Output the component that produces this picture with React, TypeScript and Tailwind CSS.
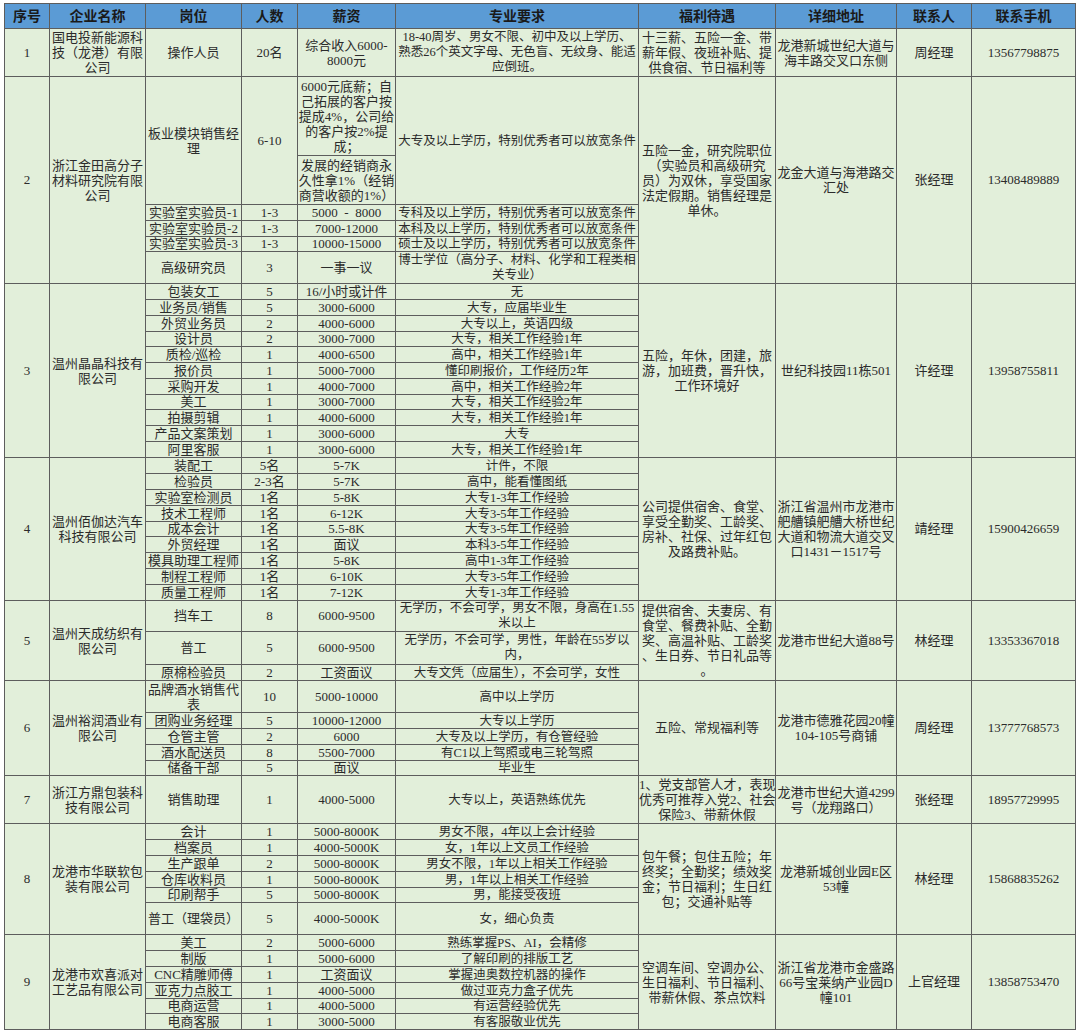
import React from 'react';

type Text = string | string[];

type Job = {
  pos: Text;
  num: string;
  pay: Text;
  pay2?: Text;
  req: Text;
  h: string;
  h2?: string;
};

type Company = {
  no: string;
  name: Text;
  welfare: Text;
  addr: Text;
  contact: string;
  phone: string;
  jobs: Job[];
};

const companies: Company[] = [
  {
    no: '1',
    name: ['国电投新能源科', '技（龙港）有限', '公司'],
    welfare: ['十三薪、五险一金、带', '薪年假、夜班补贴、提', '供食宿、节日福利等'],
    addr: ['龙港新城世纪大道与', '海丰路交叉口东侧'],
    contact: '周经理',
    phone: '13567798875',
    jobs: [
      {
        pos: '操作人员',
        num: '20名',
        pay: ['综合收入6000-', '8000元'],
        req: ['18-40周岁、男女不限、初中及以上学历、', '熟悉26个英文字母、无色盲、无纹身、能适', '应倒班。'],
        h: 'h-[48px]',
      },
    ],
  },
  {
    no: '2',
    name: ['浙江金田高分子', '材料研究院有限', '公司'],
    welfare: ['五险一金，研究院职位', '（实验员和高级研究', '员）为双休，享受国家', '法定假期。销售经理是', '单休。'],
    addr: ['龙金大道与海港路交', '汇处'],
    contact: '张经理',
    phone: '13408489889',
    jobs: [
      {
        pos: ['板业模块销售经', '理'],
        num: '6-10',
        pay: ['6000元底薪；自', '己拓展的客户按', '提成4%，公司给', '的客户按2%提', '成；'],
        pay2: ['发展的经销商永', '久性拿1%（经销', '商营收额的1%）'],
        req: '大专及以上学历，特别优秀者可以放宽条件',
        h: 'h-[79px]',
        h2: 'h-[49px]',
      },
      { pos: '实验室实验员-1', num: '1-3', pay: '5000  -  8000', req: '专科及以上学历，特别优秀者可以放宽条件', h: 'h-[16px]' },
      { pos: '实验室实验员-2', num: '1-3', pay: '7000-12000', req: '本科及以上学历，特别优秀者可以放宽条件', h: 'h-[16px]' },
      { pos: '实验室实验员-3', num: '1-3', pay: '10000-15000', req: '硕士及以上学历，特别优秀者可以放宽条件', h: 'h-[15px]' },
      { pos: '高级研究员', num: '3', pay: '一事一议', req: ['博士学位（高分子、材料、化学和工程类相', '关专业）'], h: 'h-[32px]' },
    ],
  },
  {
    no: '3',
    name: ['温州晶晶科技有', '限公司'],
    welfare: ['五险，年休，团建，旅', '游，加班费，晋升快，', '工作环境好'],
    addr: '世纪科技园11栋501',
    contact: '许经理',
    phone: '13958755811',
    jobs: [
      { pos: '包装女工', num: '5', pay: '16/小时或计件', req: '无', h: 'h-[16px]' },
      { pos: '业务员/销售', num: '5', pay: '3000-6000', req: '大专，应届毕业生', h: 'h-[16px]' },
      { pos: '外贸业务员', num: '2', pay: '4000-6000', req: '大专以上，英语四级', h: 'h-[16px]' },
      { pos: '设计员', num: '2', pay: '3000-7000', req: '大专，相关工作经验1年', h: 'h-[15px]' },
      { pos: '质检/巡检', num: '1', pay: '4000-6500', req: '高中，相关工作经验1年', h: 'h-[16px]' },
      { pos: '报价员', num: '1', pay: '5000-7000', req: '懂印刷报价，工作经历2年', h: 'h-[16px]' },
      { pos: '采购开发', num: '1', pay: '4000-7000', req: '高中，相关工作经验2年', h: 'h-[16px]' },
      { pos: '美工', num: '1', pay: '3000-7000', req: '大专，相关工作经验2年', h: 'h-[15px]' },
      { pos: '拍摄剪辑', num: '1', pay: '4000-6000', req: '大专，相关工作经验1年', h: 'h-[16px]' },
      { pos: '产品文案策划', num: '1', pay: '3000-6000', req: '大专', h: 'h-[16px]' },
      { pos: '阿里客服', num: '1', pay: '3000-6000', req: '大专，相关工作经验1年', h: 'h-[16px]' },
    ],
  },
  {
    no: '4',
    name: ['温州佰伽达汽车', '科技有限公司'],
    welfare: ['公司提供宿舍、食堂、', '享受全勤奖、工龄奖、', '房补、社保、过年红包', '及路费补贴。'],
    addr: ['浙江省温州市龙港市', '舥艚镇舥艚大桥世纪', '大道和物流大道交叉', '口1431－1517号'],
    contact: '靖经理',
    phone: '15900426659',
    jobs: [
      { pos: '装配工', num: '5名', pay: '5-7K', req: '计件，不限', h: 'h-[16px]' },
      { pos: '检验员', num: '2-3名', pay: '5-7K', req: '高中，能看懂图纸', h: 'h-[16px]' },
      { pos: '实验室检测员', num: '1名', pay: '5-8K', req: '大专1-3年工作经验', h: 'h-[16px]' },
      { pos: '技术工程师', num: '1名', pay: '6-12K', req: '大专3-5年工作经验', h: 'h-[16px]' },
      { pos: '成本会计', num: '1名', pay: '5.5-8K', req: '大专3-5年工作经验', h: 'h-[15px]' },
      { pos: '外贸经理', num: '1名', pay: '面议', req: '本科3-5年工作经验', h: 'h-[16px]' },
      { pos: '模具助理工程师', num: '1名', pay: '5-8K', req: '高中1-3年工作经验', h: 'h-[16px]' },
      { pos: '制程工程师', num: '1名', pay: '6-10K', req: '大专3-5年工作经验', h: 'h-[16px]' },
      { pos: '质量工程师', num: '1名', pay: '7-12K', req: '大专1-3年工作经验', h: 'h-[16px]' },
    ],
  },
  {
    no: '5',
    name: ['温州天成纺织有', '限公司'],
    welfare: ['提供宿舍、夫妻房、有', '食堂、餐费补贴、全勤', '奖、高温补贴、工龄奖', '、生日券、节日礼品等', '。'],
    addr: '龙港市世纪大道88号',
    contact: '林经理',
    phone: '13353367018',
    jobs: [
      { pos: '挡车工', num: '8', pay: '6000-9500', req: ['无学历，不会可学，男女不限，身高在1.55', '米以上'], h: 'h-[31px]' },
      { pos: '普工', num: '5', pay: '6000-9500', req: ['无学历，不会可学，男性，年龄在55岁以', '内，'], h: 'h-[33px]' },
      { pos: '原棉检验员', num: '2', pay: '工资面议', req: '大专文凭（应届生），不会可学，女性', h: 'h-[16px]' },
    ],
  },
  {
    no: '6',
    name: ['温州裕润酒业有', '限公司'],
    welfare: '五险、常规福利等',
    addr: ['龙港市德雅花园20幢', '104-105号商铺'],
    contact: '周经理',
    phone: '13777768573',
    jobs: [
      { pos: ['品牌酒水销售代', '表'], num: '10', pay: '5000-10000', req: '高中以上学历', h: 'h-[32px]' },
      { pos: '团购业务经理', num: '5', pay: '10000-12000', req: '大专以上学历', h: 'h-[16px]' },
      { pos: '仓管主管', num: '2', pay: '6000', req: '大专及以上学历，有仓管经验', h: 'h-[16px]' },
      { pos: '酒水配送员', num: '8', pay: '5500-7000', req: '有C1以上驾照或电三轮驾照', h: 'h-[16px]' },
      { pos: '储备干部', num: '5', pay: '面议', req: '毕业生', h: 'h-[15px]' },
    ],
  },
  {
    no: '7',
    name: ['浙江方鼎包装科', '技有限公司'],
    welfare: ['1、党支部管人才，表现', '优秀可推荐入党2、社会', '保险3、带薪休假'],
    addr: ['龙港市世纪大道4299', '号（龙翔路口）'],
    contact: '张经理',
    phone: '18957729995',
    jobs: [{ pos: '销售助理', num: '1', pay: '4000-5000', req: '大专以上，英语熟练优先', h: 'h-[48px]' }],
  },
  {
    no: '8',
    name: ['龙港市华联软包', '装有限公司'],
    welfare: ['包午餐；包住五险；年', '终奖；全勤奖；绩效奖', '金；节日福利；生日红', '包；交通补贴等'],
    addr: ['龙港新城创业园E区', '53幢'],
    contact: '林经理',
    phone: '15868835262',
    jobs: [
      { pos: '会计', num: '1', pay: '5000-8000K', req: '男女不限，4年以上会计经验', h: 'h-[16px]' },
      { pos: '档案员', num: '1', pay: '4000-5000K', req: '女，1年以上文员工作经验', h: 'h-[16px]' },
      { pos: '生产跟单', num: '2', pay: '5000-8000K', req: '男女不限，1年以上相关工作经验', h: 'h-[16px]' },
      { pos: '仓库收料员', num: '1', pay: '5000-8000K', req: '男，1年以上相关工作经验', h: 'h-[16px]' },
      { pos: '印刷帮手', num: '5', pay: '5000-8000K', req: '男，能接受夜班', h: 'h-[15px]' },
      { pos: '普工（理袋员）', num: '5', pay: '4000-5000K', req: '女，细心负责', h: 'h-[32px]' },
    ],
  },
  {
    no: '9',
    name: ['龙港市欢喜派对', '工艺品有限公司'],
    welfare: ['空调车间、空调办公、', '生日福利、节日福利、', '带薪休假、茶点饮料'],
    addr: ['浙江省龙港市金盛路', '66号宝莱纳产业园D', '幢101'],
    contact: '上官经理',
    phone: '13858753470',
    jobs: [
      { pos: '美工', num: '2', pay: '5000-6000', req: '熟练掌握PS、AI，会精修', h: 'h-[16px]' },
      { pos: '制版', num: '1', pay: '5000-6000', req: '了解印刷的排版工艺', h: 'h-[16px]' },
      { pos: 'CNC精雕师傅', num: '1', pay: '工资面议', req: '掌握迪奥数控机器的操作', h: 'h-[16px]' },
      { pos: '亚克力点胶工', num: '1', pay: '4000-5000', req: '做过亚克力盒子优先', h: 'h-[16px]' },
      { pos: '电商运营', num: '1', pay: '4000-5000', req: '有运营经验优先', h: 'h-[15px]' },
      { pos: '电商客服', num: '1', pay: '3000-5000', req: '有客服敬业优先', h: 'h-[16px]' },
    ],
  },
];

const headers = ['序号', '企业名称', '岗位', '人数', '薪资', '专业要求', '福利待遇', '详细地址', '联系人', '联系手机'];

const base = 'border border-[#5d5d5d] p-0 text-center align-middle whitespace-pre leading-[14px] text-[#2b2b2b]';
const cell = base + ' text-[13px]';
const reqCell = base + ' text-[12.5px]';

function Lines({ t }: { t: Text }) {
  if (!Array.isArray(t)) return <>{t}</>;
  return (
    <div className="leading-[15px]">
      {t.map((s, i) => (
        <React.Fragment key={i}>
          {i > 0 && <br />}
          {s}
        </React.Fragment>
      ))}
    </div>
  );
}

function CompanyRows({ co }: { co: Company }) {
  const span = co.jobs.reduce((n, j) => n + (j.pay2 ? 2 : 1), 0);
  const rows: React.ReactNode[] = [];

  co.jobs.forEach((j, i) => {
    const first = i === 0;
    const rs = j.pay2 ? 2 : 1;
    rows.push(
      <tr key={`${co.no}-${i}`} className={j.h}>
        {first && (
          <>
            <td rowSpan={span} className={cell}>{co.no}</td>
            <td rowSpan={span} className={cell}><Lines t={co.name} /></td>
          </>
        )}
        <td rowSpan={rs} className={cell}><Lines t={j.pos} /></td>
        <td rowSpan={rs} className={cell}>{j.num}</td>
        <td className={cell}><Lines t={j.pay} /></td>
        <td rowSpan={rs} className={reqCell}><Lines t={j.req} /></td>
        {first && (
          <>
            <td rowSpan={span} className={cell}><Lines t={co.welfare} /></td>
            <td rowSpan={span} className={cell}><Lines t={co.addr} /></td>
            <td rowSpan={span} className={cell}>{co.contact}</td>
            <td rowSpan={span} className={cell}>{co.phone}</td>
          </>
        )}
      </tr>
    );
    if (j.pay2) {
      rows.push(
        <tr key={`${co.no}-${i}-b`} className={j.h2}>
          <td className={cell}><Lines t={j.pay2} /></td>
        </tr>
      );
    }
  });

  return <>{rows}</>;
}

export default function App() {
  return (
    <div className="min-h-screen bg-white pl-[4px] pt-[3px] font-['Liberation_Serif','Noto_Sans_CJK_SC',serif]">
      <table className="w-[1071px] table-fixed border-collapse bg-[#e2efda]">
        <colgroup>
          <col className="w-[45px]" />
          <col className="w-[96px]" />
          <col className="w-[96px]" />
          <col className="w-[56px]" />
          <col className="w-[98px]" />
          <col className="w-[243px]" />
          <col className="w-[137px]" />
          <col className="w-[121px]" />
          <col className="w-[75px]" />
          <col className="w-[104px]" />
        </colgroup>
        <thead>
          <tr className="h-[25px] bg-[#5b9bd5]">
            {headers.map((h) => (
              <th
                key={h}
                className="border border-[#5d5d5d] p-0 text-center align-middle text-[14px] font-bold text-[#1a1a1a]"
              >
                {h}
              </th>
            ))}
          </tr>
        </thead>
        <tbody>
          {companies.map((co) => (
            <CompanyRows key={co.no} co={co} />
          ))}
        </tbody>
      </table>
    </div>
  );
}
